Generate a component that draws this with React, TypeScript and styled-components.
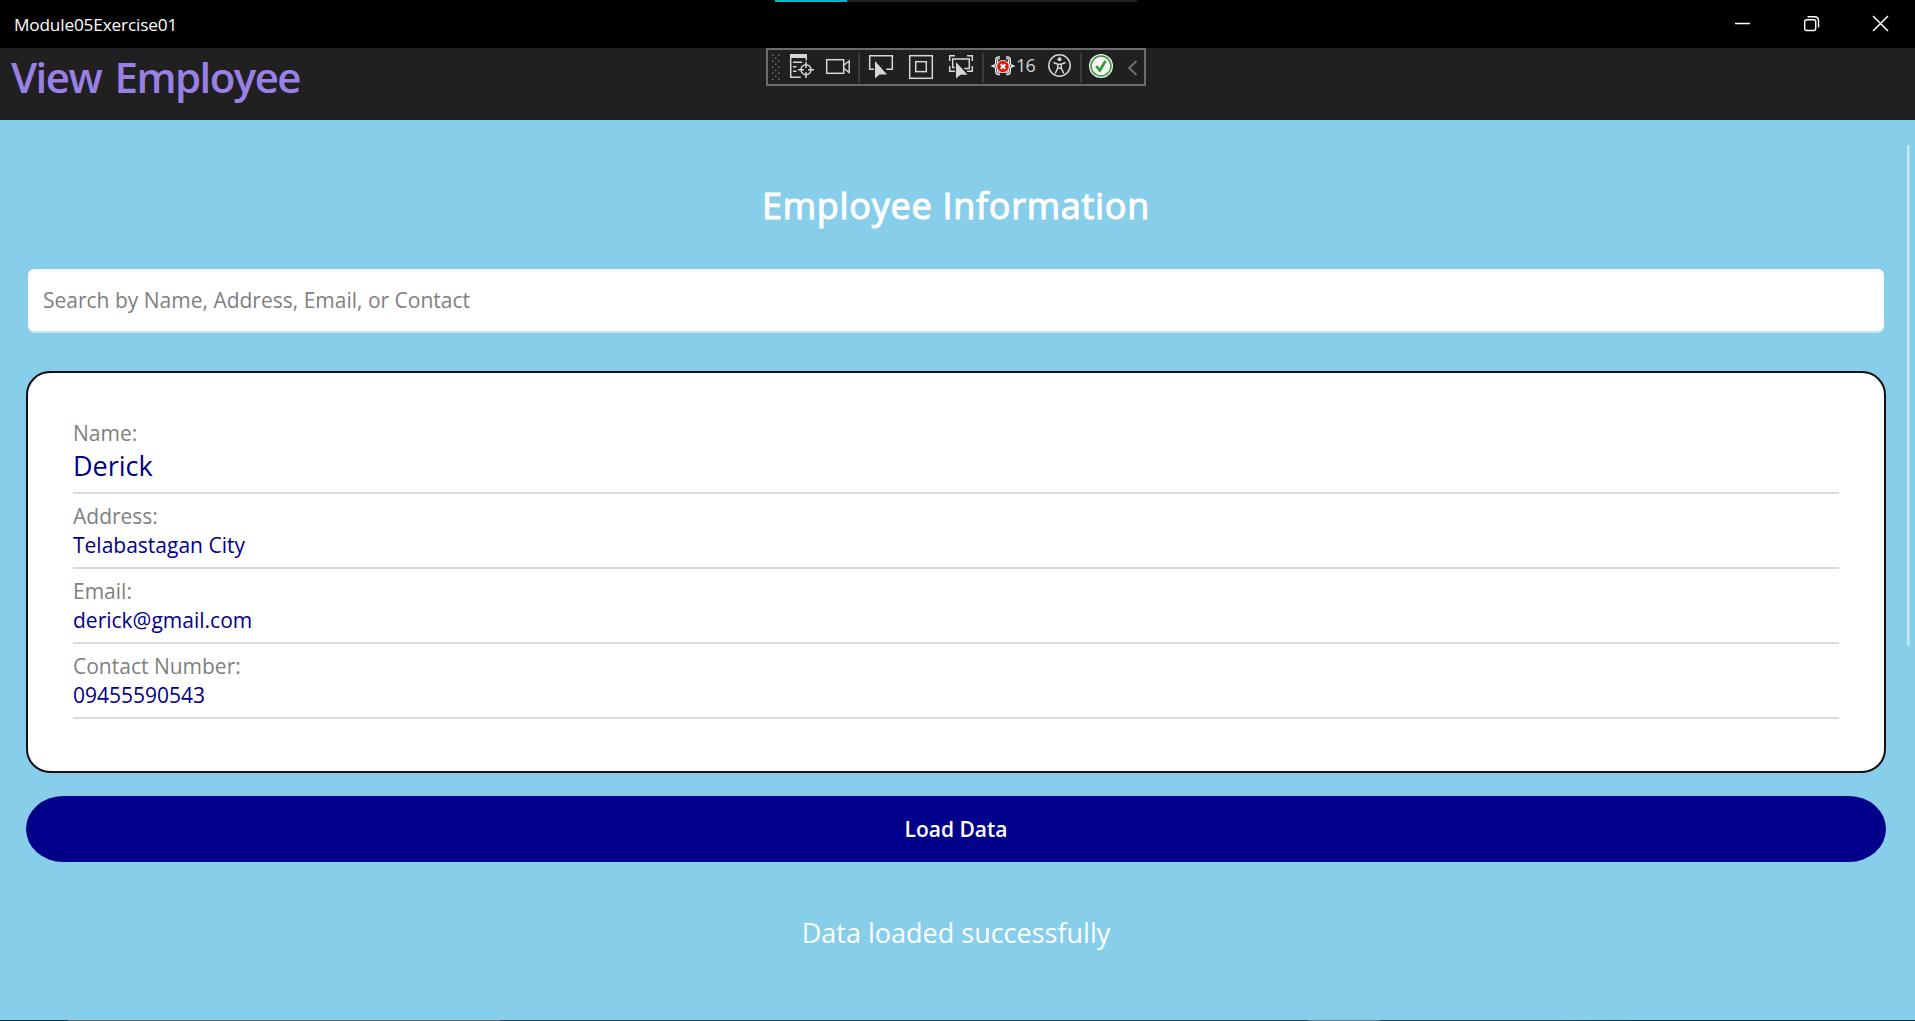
import React from 'react';
import styled, { createGlobalStyle } from 'styled-components';

const Global = createGlobalStyle`
  * { box-sizing: border-box; }
  html, body { margin: 0; padding: 0; background: #87ceeb; overflow: hidden; }
  body { font-family: "Open Sans", "Noto Sans", sans-serif; }
  h1, h2, p, dl, dt, dd { margin: 0; font-weight: 400; }
`;

const Window = styled.div`
  position: relative;
  display: flex;
  flex-direction: column;
  width: 1915px;
  height: 1021px;
  background: #87ceeb;
  overflow: hidden;
`;

const TitleBar = styled.header`
  display: flex;
  justify-content: space-between;
  height: 48px;
  flex: none;
  padding-left: 14px;
  background: #000;
  color: #fff;
`;

const AppName = styled.span`
  font: 400 17.2px/50px "Open Sans", sans-serif;
  letter-spacing: -0.15px;
`;

const WindowButtons = styled.div`
  display: flex;
`;

const WindowButton = styled.button`
  width: 69px;
  height: 48px;
  padding: 0;
  border: 0;
  background: none;
  color: #fff;
  svg { display: block; }
`;

const PageHeader = styled.div`
  flex: none;
  height: 72px;
  padding-left: 11px;
  background: #202020;
`;

const PageTitle = styled.h1`
  font: 600 42px/57px "Open Sans", sans-serif;
  letter-spacing: -1.55px;
  word-spacing: 4px;
  color: #9880e5;
`;

const Content = styled.main`
  flex: 1;
  display: flex;
  flex-direction: column;
  padding: 0 29px 0 26px;
`;

const Heading = styled.h2`
  margin-top: 61px;
  font: 400 36px/50px "Open Sans", sans-serif;
  letter-spacing: 0.73px;
  -webkit-text-stroke: 1.1px #fff;
  color: #fff;
  text-align: center;
`;

const SearchBox = styled.input`
  height: 64px;
  margin: 38px 2px 0;
  padding: 0 15px;
  border: 0;
  border-bottom: 2px solid #c5e8f5;
  border-radius: 6px;
  background: #fff;
  background-clip: padding-box;
  font: 400 21px/29px "Open Sans", sans-serif;
  color: #000;
  outline: 0;
  &::placeholder { color: #808080; opacity: 1; }
`;

const Card = styled.dl`
  height: 402px;
  margin-top: 38px;
  padding: 38px 45px 0;
  border: 2px solid #111;
  border-radius: 24px;
  background: #fff;
`;

const Field = styled.div`
  padding: 7.5px 0;
  border-bottom: 2px solid #dadada;
`;

const Label = styled.dt`
  font-size: 21px;
  line-height: 29px;
  color: #808080;
`;

const Value = styled.dd<{ $large?: boolean }>`
  padding-bottom: ${p => (p.$large ? 2 : 0)}px;
  font-size: ${p => (p.$large ? 27 : 21)}px;
  line-height: ${p => (p.$large ? 35 : 29)}px;
  color: #00008b;
`;

const LoadButton = styled.button`
  flex: none;
  height: 66px;
  margin-top: 23px;
  padding: 0;
  border: 0;
  border-radius: 37px / 33px;
  background: #00008b;
  color: #fff;
  font: 600 21px/66px "Open Sans", sans-serif;
`;

const Status = styled.p`
  margin-top: 52px;
  font-size: 27px;
  line-height: 37px;
  color: #fff;
  text-align: center;
`;

const ScrollThumb = styled.div`
  position: absolute;
  left: 1907px;
  top: 145px;
  width: 3px;
  height: 501px;
  border-radius: 1.5px;
  background: linear-gradient(to right, #c9e9f6 0 2px, #a5daf0 2px);
`;

const ProgressTrack = styled.div`
  position: absolute;
  left: 775px;
  top: 0;
  width: 362px;
  height: 2px;
  background: #202020;
`;

const ProgressFill = styled.div`
  width: 72px;
  height: 2px;
  background: #00b7c3;
`;

const DebugBar = styled.div`
  position: absolute;
  left: 766px;
  top: 48px;
  display: flex;
  width: 380px;
  height: 38px;
  border: 2px solid #6b6b6b;
  background: #202020;
`;

const Tool = styled.span<{ $w: number }>`
  flex: none;
  width: ${p => p.$w}px;
  height: 34px;
  svg { display: block; }
`;

const Count = styled.span`
  flex: none;
  width: 25px;
  font: 400 18px/31px "Open Sans", sans-serif;
  letter-spacing: -0.7px;
  color: #d4d4d4;
`;

const BottomEdge = styled.div`
  position: absolute;
  left: 0;
  top: 1020px;
  width: 1915px;
  height: 1px;
  background: linear-gradient(to right, #132c38 0 68px, #66686a 68px 500px, #2f4348 500px 1308px, #66777c 1308px 1380px, #2f4348 1380px 1560px, #132c38 1640px);
`;

const fields = [
  { label: 'Name:', value: 'Derick', large: true },
  { label: 'Address:', value: 'Telabastagan City' },
  { label: 'Email:', value: 'derick@gmail.com' },
  { label: 'Contact Number:', value: '09455590543' },
];

/* Each toolbar drawing is laid out in window coordinates, so a slot only needs its left edge. */
const Slot = ({ x, w, children }: { x: number; w: number; children?: React.ReactNode }) => (
  <Tool $w={w}>
    <svg width={w} height="34" viewBox={`${x} 50 ${w} 34`} fill="none" stroke="#d6d6d6" strokeWidth="1.5">
      {children}
    </svg>
  </Tool>
);

const gripDots = Array.from({ length: 9 }, (_, row) =>
  (row % 2 === 0 ? [772, 778] : [775]).map(x => ({ x, y: 54.5 + row * 3 })),
).flat();

const Divider = ({ x }: { x: number }) => <rect x={x} y="53" width="2" height="30" fill="#3d3d3d" stroke="none" />;

const braces =
  'M1000 57.8h-1.2q-2.3 0-2.3 2.5v2.9q0 2-2 2.8q2 .8 2 2.8v2.4q0 2.5 2.3 2.5h1.2' +
  'M1006 57.8h1.2q2.3 0 2.3 2.5v2.9q0 2 2 2.8q-2 .8-2 2.8v2.4q0 2.5-2.3 2.5h-1.2';

export default function App() {
  return (
    <Window>
      <Global />
      <TitleBar>
        <AppName>Module05Exercise01</AppName>
        <WindowButtons>
          <WindowButton aria-label="Minimize">
            <svg width="69" height="48" viewBox="1708 0 69 48"><path d="M1735 23.5h15" stroke="#fff" strokeWidth="1.5" /></svg>
          </WindowButton>
          <WindowButton aria-label="Restore">
            <svg width="69" height="48" viewBox="1777 0 69 48" fill="none" stroke="#fff" strokeWidth="1.4">
              <rect x="1804.7" y="19.7" width="11" height="10.8" rx="2" />
              <path d="M1807.5 16.7h7.2q3.8 0 3.8 3.8v7" />
            </svg>
          </WindowButton>
          <WindowButton aria-label="Close">
            <svg width="69" height="48" viewBox="1846 0 69 48"><path d="M1873 16l15 15M1888 16l-15 15" stroke="#fff" strokeWidth="1.5" /></svg>
          </WindowButton>
        </WindowButtons>
      </TitleBar>

      <PageHeader>
        <PageTitle>View Employee</PageTitle>
      </PageHeader>

      <Content>
        <Heading>Employee Information</Heading>
        <SearchBox placeholder="Search by Name, Address, Email, or Contact" />
        <Card>
          {fields.map(f => (
            <Field key={f.label}>
              <Label>{f.label}</Label>
              <Value $large={f.large}>{f.value}</Value>
            </Field>
          ))}
        </Card>
        <LoadButton>Load Data</LoadButton>
        <Status>Data loaded successfully</Status>
      </Content>

      <ScrollThumb />
      <ProgressTrack><ProgressFill /></ProgressTrack>
      <BottomEdge />

      <DebugBar>
        <Slot x={768} w={16}>
          {gripDots.map(d => <rect key={`${d.x}-${d.y}`} x={d.x} y={d.y} width="1.5" height="1.5" fill="#707070" stroke="none" />)}
        </Slot>
        <Slot x={784} w={36}>
          <path d="M790 54h17v4h-17z" fill="#d6d6d6" stroke="none" />
          <path d="M790.7 56v21.3h10M793 62.2h9M793 66.7h3.5M793 71.2h3.5M806.3 57v3.5" />
          <circle cx="806" cy="69.8" r="5" />
          <path d="M806 62v6M806 72v6M798 69.8h6M808 69.8h6" />
        </Slot>
        <Slot x={820} w={36}>
          <rect x="826.7" y="59.7" width="17" height="13.6" />
          <path d="M844 65l5.2-4v11.5l-5.2-4" />
        </Slot>
        <Slot x={856} w={46}>
          <Divider x={858} />
          <path d="M874 69.3h-4.3V55.7h22.6v13.6h-6" />
          <path d="M875 61v17.5l4.5-4h7.5z" fill="#d6d6d6" stroke="none" />
        </Slot>
        <Slot x={902} w={38}>
          <rect x="909.7" y="55.7" width="22.6" height="22.6" />
          <rect x="915.7" y="61.7" width="10.6" height="9.9" />
        </Slot>
        <Slot x={940} w={40}>
          <path d="M949.7 61v-5.3h5.3M967 55.7h5.3V61M972.3 66v5.3H967M949.7 66v5.3h5.3" />
          <path d="M954.7 67.5h-2V59h16.6v9.5h-5" />
          <path d="M956 62v16.5l4.5-3.8h7z" fill="#d6d6d6" stroke="none" />
        </Slot>
        <Slot x={980} w={36}>
          <Divider x={982} />
          <path d={braces} strokeWidth="3" stroke="#f0f0f0" />
          <path d={braces} strokeWidth="0.8" stroke="#444" />
          <circle cx="1003" cy="66.5" r="6.6" fill="#f0f0f0" stroke="none" />
          <circle cx="1003" cy="66.5" r="5.8" fill="#e51400" stroke="none" />
          <path d="M1000.7 64.2l4.6 4.6M1005.3 64.2l-4.6 4.6" stroke="#fff" strokeWidth="2" />
        </Slot>
        <Count>16</Count>
        <Slot x={1041} w={37}>
          <circle cx="1059.5" cy="65.5" r="10.7" />
          <circle cx="1059.5" cy="59.3" r="2" fill="#d6d6d6" stroke="none" />
          <path d="M1053.5 62.5l4.3 1.7h3.4l4.3-1.7M1057.8 64v4l-2.6 5.5M1061.2 64v4l2.6 5.5M1057.8 68.3h3.4" />
        </Slot>
        <Slot x={1078} w={40}>
          <Divider x={1080} />
          <circle cx="1101" cy="66" r="12" fill="#f5f5f5" stroke="none" />
          <circle cx="1101" cy="66" r="10" stroke="#339933" strokeWidth="1.5" />
          <path d="M1096.3 66l3.5 4.5l5.7-9.5" stroke="#339933" strokeWidth="2.6" />
        </Slot>
        <Slot x={1118} w={26}>
          <path d="M1136.5 61l-7.3 7l7.3 7" stroke="#707070" strokeWidth="2" />
        </Slot>
      </DebugBar>
    </Window>
  );
}
